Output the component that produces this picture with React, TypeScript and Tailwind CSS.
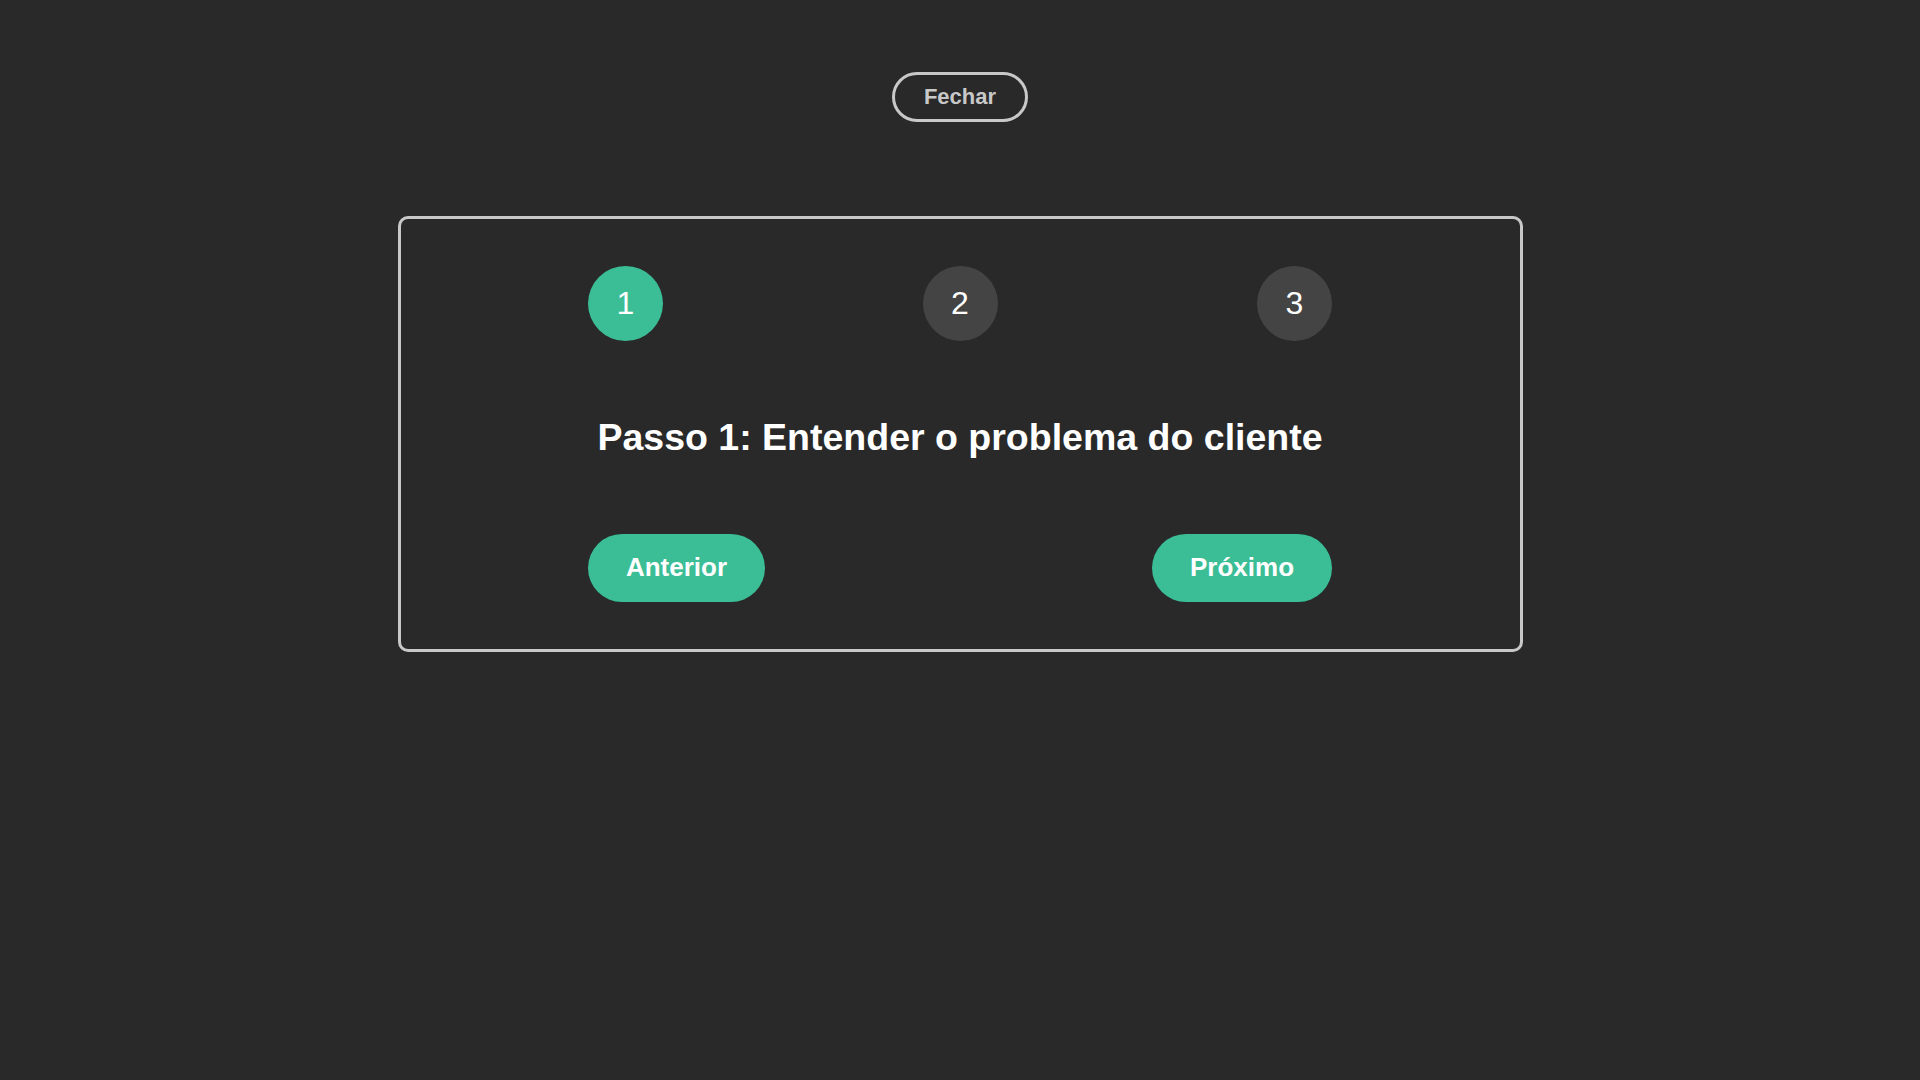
import { useState } from "react";

const steps = [
  "Passo 1: Entender o problema do cliente",
  "Passo 2: Propor uma solução",
  "Passo 3: Acompanhar o resultado",
];

export default function App() {
  const [current, setCurrent] = useState(0);

  return (
    <div className="flex min-h-screen flex-col items-center bg-[#292929] pt-[72px] font-['Liberation_Sans',Arial,sans-serif]">
      <button className="h-[50px] w-[136px] rounded-full border-[3px] border-[#c8c8c8] pb-[2px] text-[22px] font-bold text-[#c8c8c8]">
        Fechar
      </button>

      <div className="mt-[94px] flex w-[1125px] flex-col items-center rounded-[10px] border-[3px] border-[#c8c8c8] pt-[47px] pb-[47px]">
        <div className="flex w-[744px] justify-between">
          {[1, 2, 3].map((n, i) => (
            <div
              key={n}
              className={
                i === current
                  ? "grid size-[75px] place-items-center rounded-full bg-[#3bbd96] pb-[2px] text-[32px] text-white"
                  : "grid size-[75px] place-items-center rounded-full bg-[#444444] pb-[2px] text-[32px] text-white"
              }
            >
              {n}
            </div>
          ))}
        </div>

        <h2 className="mt-[75px] text-[37.5px] leading-[42px] font-bold text-white">{steps[current]}</h2>

        <div className="mt-[76px] flex w-[744px] justify-between">
          <button
            onClick={() => setCurrent((c) => Math.max(0, c - 1))}
            className="h-[68px] w-[177px] rounded-full bg-[#3bbd96] pb-[2px] text-[26px] font-bold text-white"
          >
            Anterior
          </button>
          <button
            onClick={() => setCurrent((c) => Math.min(2, c + 1))}
            className="h-[68px] w-[180px] rounded-full bg-[#3bbd96] pb-[2px] text-[26px] font-bold text-white"
          >
            Próximo
          </button>
        </div>
      </div>
    </div>
  );
}
